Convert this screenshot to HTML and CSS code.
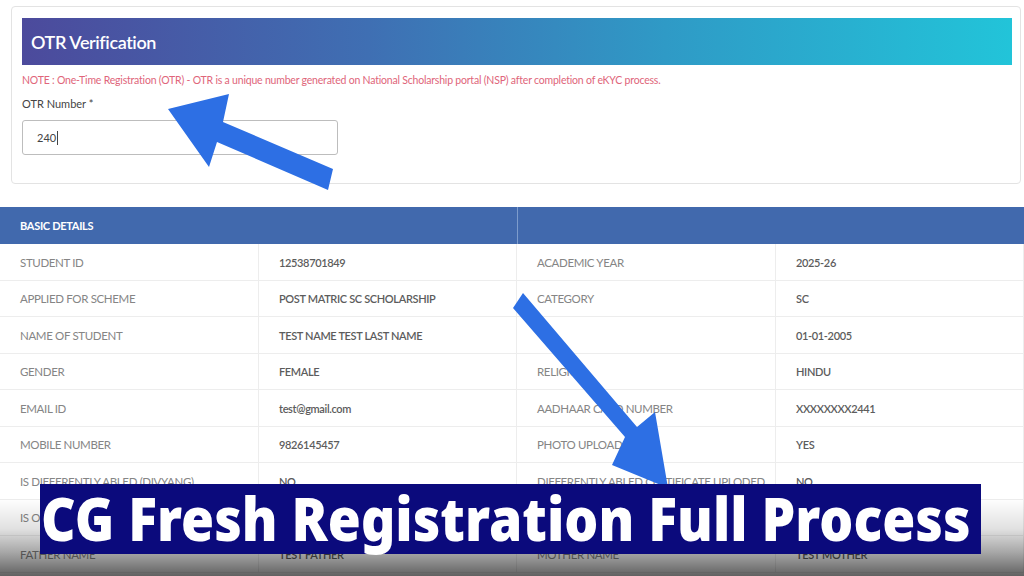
FILE: index.html
```html
<!DOCTYPE html>
<html lang="en">
<head>
<meta charset="utf-8">
<title>CG Fresh Registration Full Process</title>
<link rel="stylesheet" href="styles.css">
</head>
<body>
<div class="page">
  <div class="top">
    <section class="card">
      <div class="card-head">OTR Verification</div>
      <p class="note">NOTE : One-Time Registration (OTR) - OTR is a unique number generated on National Scholarship portal (NSP) after completion of eKYC process.</p>
      <label class="label">OTR Number *</label>
      <div class="input">240<span class="caret"></span></div>
    </section>
  </div>

  <section class="details">
    <div class="thead">
      <div class="th">BASIC DETAILS</div>
      <div class="th"></div>
    </div>
    <div class="grid">
      <div class="k">STUDENT ID</div><div class="v">12538701849</div><div class="k">ACADEMIC YEAR</div><div class="v">2025-26</div>
      <div class="k">APPLIED FOR SCHEME</div><div class="v">POST MATRIC SC SCHOLARSHIP</div><div class="k">CATEGORY</div><div class="v">SC</div>
      <div class="k">NAME OF STUDENT</div><div class="v">TEST NAME TEST LAST NAME</div><div class="k"></div><div class="v">01-01-2005</div>
      <div class="k">GENDER</div><div class="v">FEMALE</div><div class="k">RELIGION</div><div class="v">HINDU</div>
      <div class="k">EMAIL ID</div><div class="v">test@gmail.com</div><div class="k">AADHAAR CARD NUMBER</div><div class="v">XXXXXXXX2441</div>
      <div class="k">MOBILE NUMBER</div><div class="v">9826145457</div><div class="k">PHOTO UPLOADED</div><div class="v">YES</div>
      <div class="k">IS DIFFERENTLY ABLED (DIVYANG)</div><div class="v">NO</div><div class="k">DIFFERENTLY ABLED CERTIFICATE UPLODED</div><div class="v">NO</div>
      <div class="k">IS ORPHAN</div><div class="v">NO</div><div class="k">MARITAL STATUS</div><div class="v">UNMARRIED</div>
      <div class="k">FATHER NAME</div><div class="v">TEST FATHER</div><div class="k">MOTHER NAME</div><div class="v">TEST MOTHER</div>
    </div>
  </section>

  <div class="shade"></div>

  <svg class="arrows" width="1024" height="576" viewBox="0 0 1024 576" aria-hidden="true">
    <polygon fill="#2d6fe4" points="168,109 229,94 223,122 333,169 328,190 217,142 209,167"/>
    <polygon fill="#2d6fe4" points="523,293 637,427 655,412 668,488 612,465 625,437 513,308"/>
  </svg>

  <div class="banner"><span class="banner-text">CG Fresh Registration Full Process</span></div>
</div>
</body>
</html>
```
FILE: styles.css
```css
* { box-sizing: border-box; }
html, body { margin: 0; padding: 0; }
body {
  background: #ffffff;
  font-family: Lato, "Open Sans", Arial, sans-serif;
  width: 1024px;
  height: 576px;
  overflow: hidden;
}
.page {
  position: relative;
  width: 1024px;
  height: 576px;
  overflow: hidden;
}
.top {
  padding: 6px 3px 0 11px;
}
.card {
  border: 1px solid #e3e3e3;
  border-radius: 4px;
  height: 178px;
  padding: 11px 8px 0 10px;
  background: #fff;
}
.card-head {
  height: 47px;
  background: linear-gradient(to right, #4c4a9c 0%, #3f6fb3 35%, #2f9ac6 65%, #22c4d9 100%);
  color: #fff;
  font-size: 18px;
  font-weight: 600;
  letter-spacing: -0.4px;
  display: flex;
  align-items: center;
  padding-left: 9px;
}
.note {
  margin: 8px 0 0 0;
  font-size: 10.5px;
  color: #e0657a;
  letter-spacing: -0.2px;
  line-height: 14px;
}
.label {
  display: block;
  margin-top: 10px;
  font-size: 11px;
  color: #444;
  line-height: 14px;
}
.input {
  margin-top: 9px;
  width: 316px;
  height: 35px;
  border: 1px solid #bdbdbd;
  border-radius: 3px;
  display: flex;
  align-items: center;
  padding-left: 14px;
  font-size: 11px;
  color: #444;
}
.caret {
  display: inline-block;
  width: 1px;
  height: 14px;
  background: #444;
  margin-left: 1px;
}
.details {
  margin-top: 23px;
}
.thead {
  display: grid;
  grid-template-columns: 517px 507px;
  height: 37px;
  background: #4169ad;
}
.th {
  display: flex;
  align-items: center;
  padding-left: 20px;
  color: #fff;
  font-size: 11px;
  font-weight: 700;
  letter-spacing: -0.3px;
}
.th + .th { border-left: 1px solid #7d9ccc; }
.grid {
  display: grid;
  grid-template-columns: 259px 258px 259px 248px;
  grid-auto-rows: 36.5px;
}
.k, .v {
  display: flex;
  align-items: center;
  padding-left: 20px;
  padding-top: 1px;
  border-bottom: 1px solid #ededed;
  border-right: 1px solid #ededed;
  font-size: 11.5px;
  white-space: nowrap;
  overflow: hidden;
  letter-spacing: -0.35px;
}
.k { color: #858585; font-weight: 400; }
.v { color: #5c5c5c; font-weight: 600; font-size: 11px; }
.shade {
  position: absolute;
  left: 0; right: 0; bottom: 0;
  height: 78px;
  background: linear-gradient(to bottom, rgba(0,0,0,0) 0%, rgba(0,0,0,0.12) 40%, rgba(0,0,0,0.35) 70%, rgba(0,0,0,0.62) 100%);
  pointer-events: none;
}
.arrows {
  position: absolute;
  left: 0; top: 0;
}
.banner {
  position: absolute;
  left: 40px;
  top: 484px;
  width: 941px;
  height: 70px;
  background: #0b0a7c;
}
.banner-text {
  display: inline-block;
  white-space: nowrap;
  font-family: "Noto Sans", "Open Sans", sans-serif;
  font-weight: 900;
  font-size: 60px;
  line-height: 70px;
  color: #fff;
  transform: scaleX(0.892);
  transform-origin: 0 50%;
  margin-left: 1px;
  margin-top: -1px;
}
```
